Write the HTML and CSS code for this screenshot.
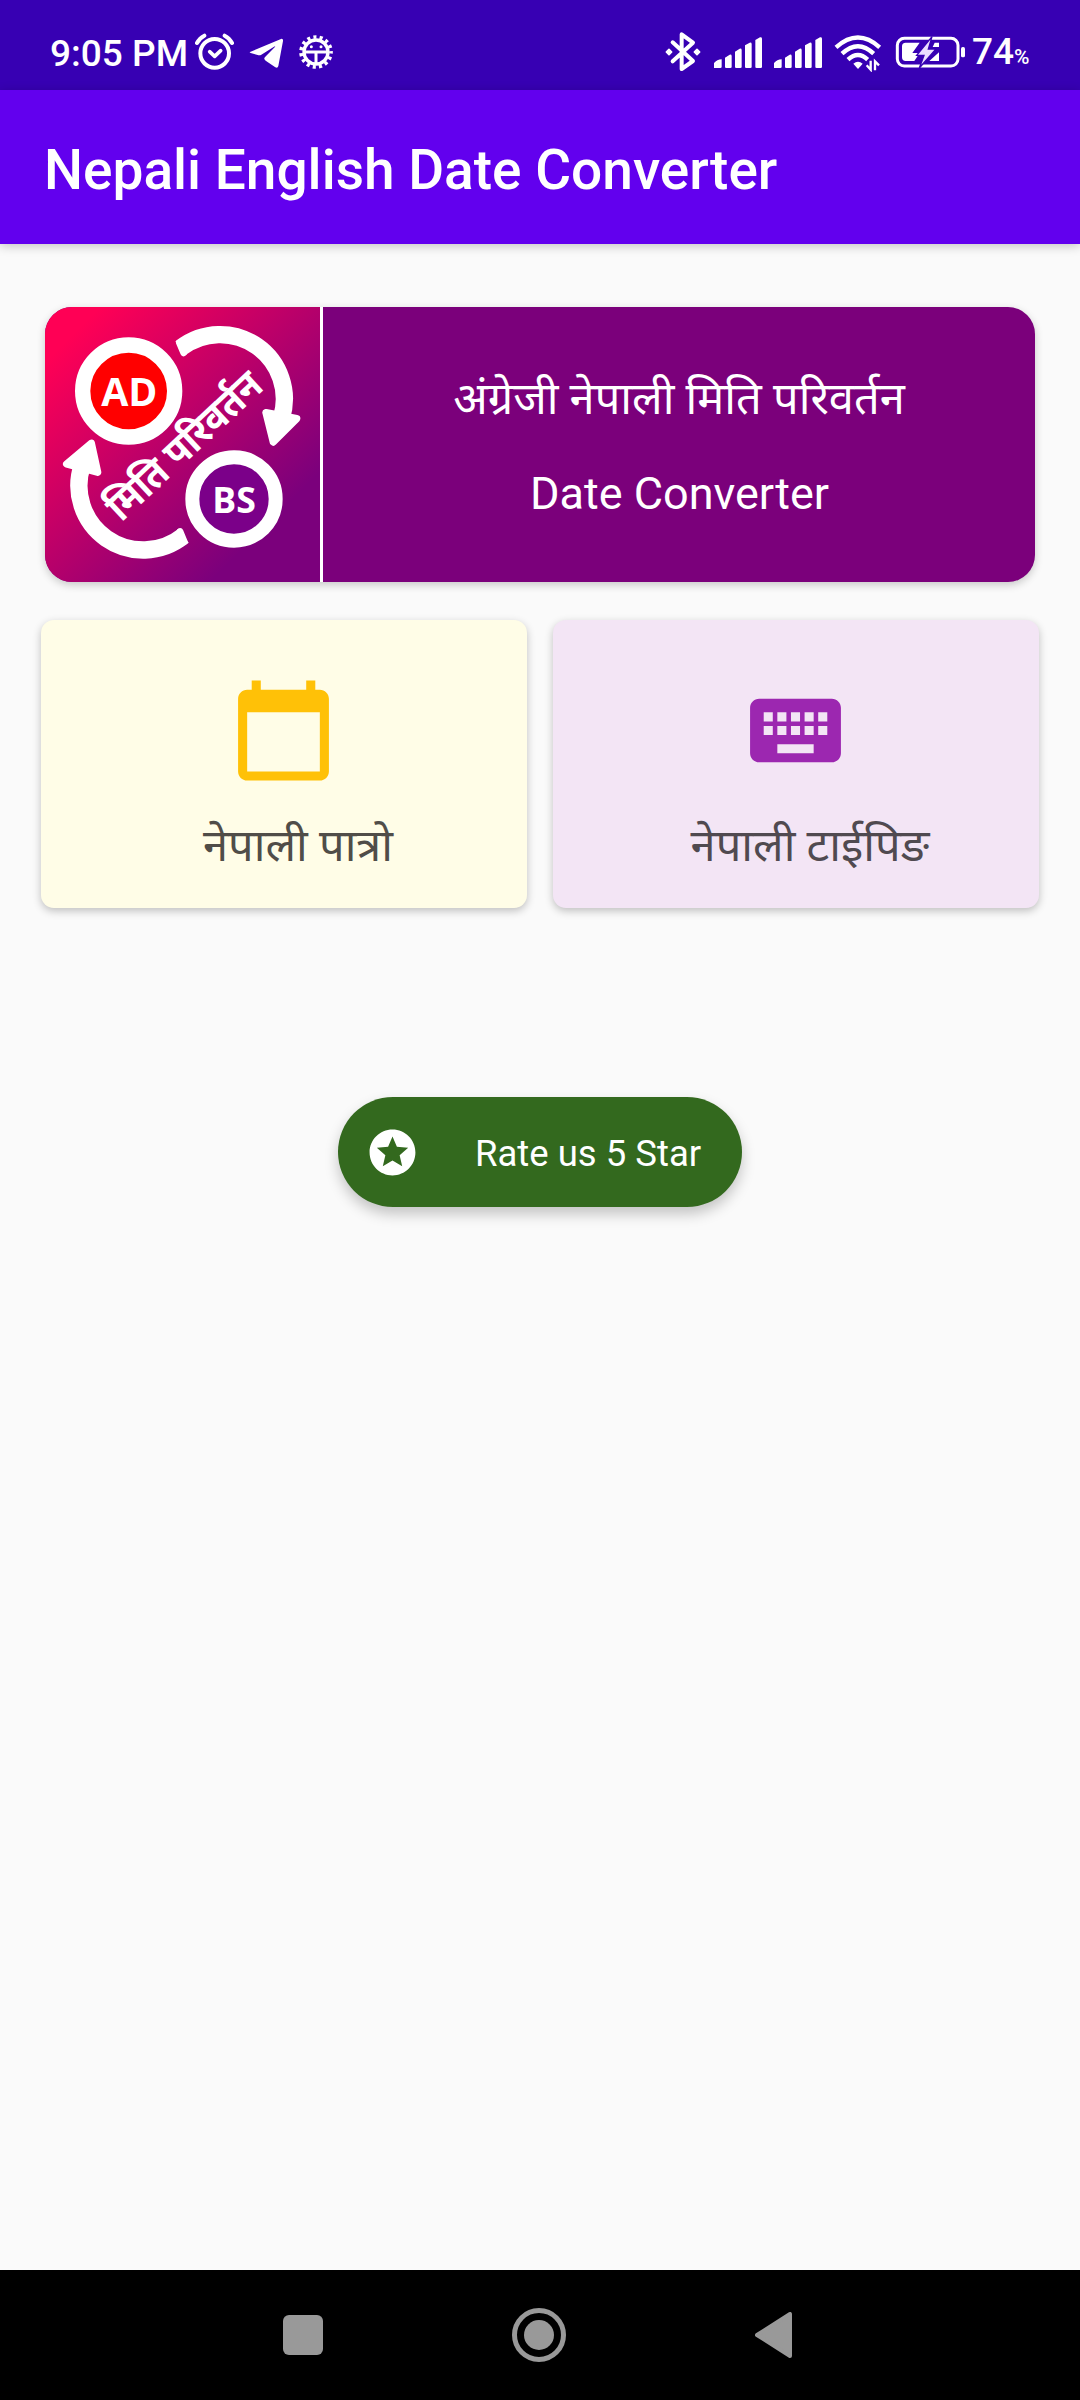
FILE: index.html
```html
<!DOCTYPE html>
<html lang="ne">
<head>
<meta charset="utf-8">
<meta name="viewport" content="width=device-width">
<title>Nepali English Date Converter</title>
<link rel="stylesheet" href="styles.css">
</head>
<body>
<div class="screen">
  <header class="status">
    <div class="status-left">
      <span class="clock">9:05 PM</span>
      <svg class="alarm" viewBox="585 96 117 120" fill="none" stroke="#fff" stroke-linecap="round" stroke-linejoin="round">
        <circle cx="644" cy="160" r="43" stroke-width="12"/>
        <path d="M629 155l15 14 18-17" stroke-width="11"/>
        <path d="M591 129q8-15 22-22M696 129q-8-15-22-22" stroke-width="12"/>
      </svg>
      <svg class="plane" viewBox="747 96 105 120" fill="#fff"><path d="M752 155l91-38q7-2 6 6l-14 75q-2 8-9 4l-29-20q-8-6-1-12l28-28q4-5-2-2l-38 24q-5 3-11 1l-21-6q-6-2 0-4z"/></svg>
      <svg class="gear" viewBox="897 96 105 120" fill="none" stroke="#fff">
        <circle cx="948" cy="156" r="36" stroke-width="10"/>
        <circle cx="948" cy="156" r="45" stroke-width="11" stroke-dasharray="9.3 9.55" stroke-dashoffset="4.6"/>
        <path d="M912 156h72M948 156v36" stroke-width="9"/>
        <circle cx="934" cy="140" r="4.500" fill="#fff" stroke="none"/><circle cx="963" cy="140" r="4.500" fill="#fff" stroke="none"/>
      </svg>
    </div>
    <div class="status-right">
      <svg class="bt" viewBox="72 96 114 120" fill="none" stroke="#fff" stroke-width="12" stroke-linecap="round" stroke-linejoin="round">
        <path d="M98 127l61 56-34 24V103l34 25-61 56"/>
        <path d="M87 148l8 8-8 8-8-8zM171 148l8 8-8 8-8-8z" fill="#fff" stroke-width="5"/>
      </svg>
      <svg class="sig" viewBox="222 96 147 120" fill="#fff"><path id="bars" d="M222 204v-15q9-10 23-11v22q0 4-4 4zM255 201v-28l14-9q6-1 6 4v33q0 3-4 3h-12q-4 0-4-3zM285 201v-46l14-9q6-1 6 4v51q0 3-4 3h-12q-4 0-4-3zM315 201v-65l14-8q6-1 6 4v69q0 3-4 3h-12q-4 0-4-3zM346 201v-81l14-8q6-1 6 4v85q0 3-4 3h-12q-4 0-4-3z"/></svg>
      <svg class="sig second" viewBox="222 96 147 120" fill="#fff"><use href="#bars"/></svg>
      <svg class="wifi" viewBox="582 96 144 120" fill="none" stroke="#fff" stroke-width="13">
        <path d="M588 142q66-59 131 0M606 161q48-45 95 0M624 179q30-28 59 0"/>
        <path d="M640 191q14-11 28 0l-14 16z" fill="#fff" stroke="none"/>
        <path d="M692 182v27l-12-13M705 211v-27l12 12" stroke-width="7"/>
      </svg>
      <svg class="battery" viewBox="765 96 213 120">
        <rect x="772" y="115" width="182" height="83" rx="21" fill="none" stroke="#fff" stroke-width="9"/>
        <path d="M797 128h42l-22 31h22l-16 24h-26q-11 0-11-11v-33q0-11 11-11zM884 128h13v13h-19zM897 157v26h-29z" fill="#fff"/>
        <path d="M876 110l-46 56h22l-14 38 50-57h-23z" fill="#eadcff" stroke="#3700b3" stroke-width="4"/>
        <rect x="963" y="141" width="12" height="31" rx="5" fill="#fff"/>
      </svg>
      <span class="percent">74<small>%</small></span>
    </div>
  </header>
  <div class="appbar"><h1>Nepali English Date Converter</h1></div>
  <main>
    <section class="hero">
      <svg class="logo" viewBox="45 51 825 825">
        <defs><linearGradient id="sunset" x1="0" y1="0" x2="1" y2="1"><stop offset=".1" stop-color="#ff0055"/><stop offset=".8" stop-color="#7b007c"/></linearGradient></defs>
        <path d="M45 51h825v825H45z" fill="url(#sunset)"/>
        <g fill="none" stroke="#fff" stroke-width="52">
          <path d="M452 174A193 193 0 0 1 754 385"/>
          <path d="M460 738A193 193 0 0 1 157 525"/>
        </g>
        <g fill="#fff" stroke="#fff" stroke-width="22" stroke-linejoin="round">
          <path d="M708 368l92 18-70 70zM184 460l-74 62 93 25z"/>
          <path d="M448 158l13 31M450 724l13 31" stroke-linecap="round" stroke-width="20"/>
        </g>
        <circle cx="296" cy="303" r="138" fill="red" stroke="#fff" stroke-width="46"/>
        <circle cx="612" cy="627" r="125" fill="#7b0089" stroke="#fff" stroke-width="42"/>
        <text class="badge-text" x="298" y="348" font-size="118">AD</text>
        <text class="badge-text" x="612" y="668" font-size="107">BS</text>
        <text class="logo-text" transform="translate(274 698) rotate(-43)" textLength="590" lengthAdjust="spacingAndGlyphs">मिति परिवर्तन</text>
      </svg>
      <div class="hero-copy">
        <p class="hero-ne">अंग्रेजी नेपाली मिति परिवर्तन</p>
        <p class="hero-en">Date Converter</p>
      </div>
    </section>
    <section class="tiles">
      <div class="tile calendar">
        <svg viewBox="0 0 24 24" fill="#ffc107"><path d="M20 3h-1V1h-2v2H7V1H5v2H4c-1.100 0-2 .9-2 2v16c0 1.100.9 2 2 2h16c1.100 0 2-.9 2-2V5c0-1.100-.9-2-2-2zm0 18H4V8h16v13z"/></svg>
        <p>नेपाली पात्रो</p>
      </div>
      <div class="tile typing">
        <svg viewBox="0 0 24 24" fill="#9c27b0"><path d="M20 5H4c-1.100 0-2 .9-2 2v10c0 1.100.9 2 2 2h16c1.100 0 2-.9 2-2V7c0-1.100-.9-2-2-2zm-9 3h2v2h-2V8zm0 3h2v2h-2v-2zM8 8h2v2H8V8zm0 3h2v2H8v-2zm-1 2H5v-2h2v2zm0-3H5V8h2v2zm9 7H8v-2h8v2zm0-4h-2v-2h2v2zm0-3h-2V8h2v2zm3 3h-2v-2h2v2zm0-3h-2V8h2v2z"/></svg>
        <p>नेपाली टाईपिङ</p>
      </div>
    </section>
    <button class="rate" type="button">
      <svg viewBox="0 0 24 24" fill="#fff"><path d="M11.990 2C6.470 2 2 6.480 2 12s4.470 10 9.990 10C17.520 22 22 17.520 22 12S17.520 2 11.990 2zm4.240 16L12 15.450 7.770 18l1.120-4.810-3.730-3.230 4.920-.42L12 5l1.920 4.530 4.920.42-3.730 3.230L16.230 18z"/></svg>
      <span>Rate us 5 Star</span>
    </button>
  </main>
  <nav class="navbar">
    <svg class="recents" viewBox="0 0 40 40" fill="#999"><rect width="40" height="40" rx="6"/></svg>
    <svg class="home" viewBox="0 0 54 54" fill="#999"><circle cx="27" cy="27" r="24.500" fill="none" stroke="#999" stroke-width="5"/><circle cx="27" cy="27" r="15"/></svg>
    <svg class="back" viewBox="0 0 38 46" fill="#999" stroke="#999" stroke-width="4" stroke-linejoin="round"><path d="M35 2v42L2 23z"/></svg>
  </nav>
</div>
</body>
</html>
```
FILE: styles.css
```css
* { box-sizing: border-box; }
body, h1, p { margin: 0; }
body {
  background: #fafafa;
  font-family: Roboto, "Noto Sans Devanagari", "Noto Sans", sans-serif;
}
svg { display: block; flex: none; }
.screen {
  width: 1080px;
  height: 2400px;
  display: flex;
  flex-direction: column;
}

.status {
  height: 90px;
  flex: none;
  background: #3700b3;
  color: #fff;
  display: flex;
  justify-content: space-between;
  padding: 32px 50px 18px 50px;
  font-weight: 500;
}
.status-left, .status-right { display: flex; align-items: center; height: 40px; white-space: nowrap; }
.status-left svg, .status-right svg { height: 40px; }
.clock { width: 145px; padding-top: 4px; font-size: 37px; line-height: 40px; }
.alarm { width: 39px; }
.plane { width: 35px; margin-left: 15px; }
.gear { width: 35px; margin-left: 15px; }
.bt { width: 38px; }
.sig { width: 49px; margin-left: 12px; }
.second { margin-left: 11px; }
.wifi { width: 48px; margin-left: 11px; }
.battery { width: 71px; margin-left: 13px; }
.percent { width: 58px; padding-top: 5px; margin-left: 6px; font-size: 37px; line-height: 40px; }
.percent small { font-size: 21px; }

.appbar {
  height: 154px;
  flex: none;
  background: #6200ee;
  color: #fff;
  display: flex;
  align-items: center;
  padding: 6px 44px 0;
  box-shadow: 0 2px 10px rgba(0, 0, 0, .22);
}
.appbar h1 { font-size: 55px; font-weight: 500; line-height: 64px; white-space: nowrap; }

main {
  flex: 1;
  display: flex;
  flex-direction: column;
  align-items: center;
  padding-top: 63px;
}
.hero {
  width: 990px;
  height: 275px;
  display: flex;
  border-radius: 27px;
  overflow: hidden;
  background: #7b007b;
  color: #fff;
  box-shadow: 0 3px 9px rgba(0, 0, 0, .2);
}
.logo { width: 275px; height: 275px; }
.badge-text { font-family: "Open Sans", sans-serif; font-weight: 700; fill: #fff; text-anchor: middle; }
.logo-text { font-size: 121px; font-weight: 700; fill: #fff; }
.hero-copy {
  flex: 1;
  border-left: 3px solid #fff;
  display: flex;
  flex-direction: column;
  align-items: center;
  padding-top: 60px;
  text-align: center;
  white-space: nowrap;
}
.hero-ne { font-size: 45.200px; line-height: 64px; }
.hero-en { font-size: 45px; line-height: 52px; margin: 37px 0 0 1px; }

.tiles {
  display: grid;
  grid-template-columns: 486px 486px;
  gap: 26px;
  margin-top: 38px;
}
.tile {
  height: 288px;
  display: flex;
  flex-direction: column;
  align-items: center;
  padding-top: 56px;
  border-radius: 13px;
  box-shadow: 0 3px 8px rgba(0, 0, 0, .24);
  color: #504d48;
}
.tile svg { width: 109px; height: 109px; margin-right: 2px; }
.tile p { font-size: 45.200px; line-height: 64px; margin: 29px 0 0 28px; white-space: nowrap; }
.calendar { background: #fffde7; }
.typing { background: #f3e5f5; color: #504a50; }

.rate {
  width: 404px;
  height: 110px;
  margin: 189px 0 0;
  padding: 0 0 0 27px;
  border: 0;
  border-radius: 55px;
  background: #33691e;
  color: #fff;
  display: flex;
  align-items: center;
  box-shadow: 0 7px 14px rgba(0, 0, 0, .22);
  font: 400 36.500px/44px Roboto, sans-serif;
}
.rate svg { width: 55px; height: 55px; }
.rate span { margin: 3px 0 0 55px; white-space: nowrap; }

.navbar {
  height: 130px;
  flex: none;
  background: #000;
  display: flex;
  align-items: center;
  padding-left: 283px;
}
.recents { width: 40px; height: 40px; }
.home { width: 54px; height: 54px; margin-left: 189px; }
.back { width: 38px; height: 46px; margin-left: 189px; }
```
